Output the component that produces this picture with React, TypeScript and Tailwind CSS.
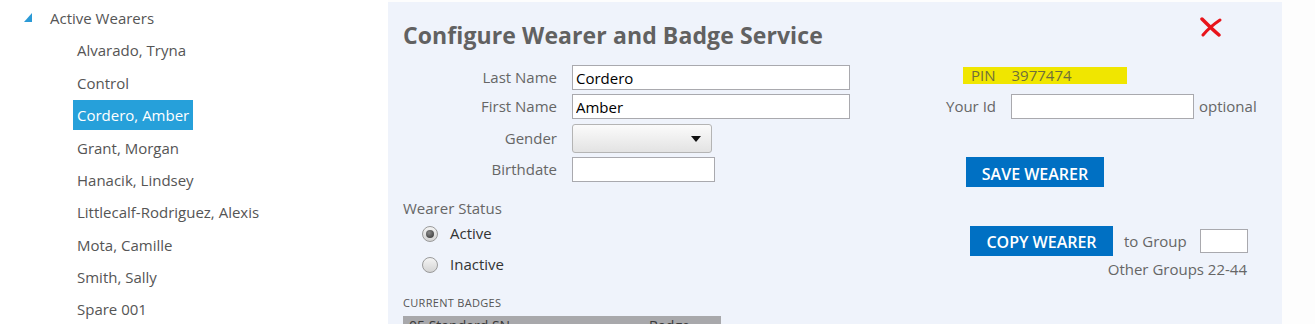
import React from "react";

const wearers = [
	"Alvarado, Tryna",
	"Control",
	"Cordero, Amber",
	"Grant, Morgan",
	"Hanacik, Lindsey",
	"Littlecalf-Rodriguez, Alexis",
	"Mota, Camille",
	"Smith, Sally",
	"Spare 001",
];

const font = { fontFamily: '"Open Sans", "Noto Sans", sans-serif' };

const Radio = ({ checked, label }: { checked?: boolean; label: string }) => (
	<label className="flex items-center gap-[12px] h-[31px]">
		<span className="w-[16px] h-[16px] rounded-full border border-[#9a9a9a] bg-gradient-to-b from-[#f4f4f4] to-[#d4d4d4] flex items-center justify-center">
			{checked && (
				<span className="w-[8px] h-[8px] rounded-full bg-[radial-gradient(circle_at_40%_35%,#8a8a8a,#2e2e2e)]" />
			)}
		</span>
		<span className="text-[15px] text-[#333]">{label}</span>
	</label>
);

const FieldRow = ({
	label,
	children,
	className,
}: {
	label: string;
	children: React.ReactNode;
	className?: string;
}) => (
	<div className={"flex items-center gap-[15px] " + (className || "")}>
		<span className="w-[154px] text-right text-[15px] text-[#666]">{label}</span>
		{children}
	</div>
);

const App: React.FC = () => {
	return (
		<div className="h-[324px] w-[1315px] overflow-hidden bg-[#fdfdfd] flex" style={font}>
			{/* tree */}
			<div className="w-[388px] shrink-0 bg-white pt-[2px]">
				<div className="h-[32.4px] flex items-center">
					<svg width="8" height="9" viewBox="0 0 8 9" className="ml-[24px] mt-[-2px]">
						<polygon points="8,0 8,9 0,9" fill="#2b9ad6" />
					</svg>
					<span className="ml-[18px] text-[15px] text-[#555]">Active Wearers</span>
				</div>
				{wearers.map((name) => (
					<div key={name} className="h-[32.4px] flex items-center pl-[73px]">
						<span
							className={
								"h-[30px] flex items-center px-[4px] text-[15px] " +
								(name === "Cordero, Amber" ? "bg-[#26a0da] text-white" : "text-[#555]")
							}>
							{name}
						</span>
					</div>
				))}
			</div>

			{/* configure panel */}
			<div className="w-[894px] shrink-0 mt-[2px] bg-[#eff3fb] pl-[15px]">
				<div className="flex justify-between pr-[59px] h-[61px]">
					<h1 className="mt-[18px] text-[23px] font-bold text-[#616161] leading-[30px] tracking-[0.1px]">
						Configure Wearer and Badge Service
					</h1>
					<svg width="24" height="20" viewBox="0 0 24 20" className="mt-[15px]">
						<path d="M3 2 C8 7 14 13 20 18" stroke="#e8141b" strokeWidth="3.5" strokeLinecap="round" fill="none" />
						<path d="M21 3 C15 7 9 12 4 18" stroke="#e8141b" strokeWidth="3" strokeLinecap="round" fill="none" />
					</svg>
				</div>

				<div className="flex">
					{/* left column */}
					<div className="w-[543px]">
						<div className="flex flex-col gap-[4px] mt-[2px]">
							<FieldRow label="Last Name">
								<input
									defaultValue="Cordero"
									className="w-[278px] h-[25px] border border-[#a9a9ae] bg-white px-[3px] text-[15px] text-black outline-none"
								/>
							</FieldRow>
							<FieldRow label="First Name">
								<input
									defaultValue="Amber"
									className="w-[278px] h-[25px] border border-[#a9a9ae] bg-white px-[3px] text-[15px] text-black outline-none"
								/>
							</FieldRow>
							<FieldRow label="Gender" className="mt-[1px]">
								<div className="w-[140px] h-[29px] rounded-[3px] border border-[#b4b4b4] bg-gradient-to-b from-[#fbfbfb] to-[#e3e3e3] flex items-center justify-end pr-[10px]">
									<svg width="10" height="6" viewBox="0 0 10 6">
										<polygon points="0,0 10,0 5,6" fill="#111" />
									</svg>
								</div>
							</FieldRow>
							<FieldRow label="Birthdate">
								<input className="w-[143px] h-[25px] border border-[#a9a9ae] bg-white outline-none" />
							</FieldRow>
						</div>

						<div className="mt-[16px] text-[15px] text-[#666] leading-[20px]">Wearer Status</div>
						<div className="ml-[19px] flex flex-col">
							<Radio checked label="Active" />
							<Radio label="Inactive" />
						</div>

						<div className="mt-[15px] text-[11px] tracking-[0.3px] text-[#555] uppercase">Current Badges</div>
						<div className="mt-[4px] w-[318px] h-[26px] bg-[#a8a8ab] flex items-start pt-[1px] px-[6px] text-[14px] leading-[18px] text-[#3a3a3a]">
							<span className="w-[240px]">05 Standard SN</span>
							<span>Badge</span>
						</div>
					</div>

					{/* right column */}
					<div className="flex flex-col">
						<div className="ml-[17px] mt-[4px] w-[164px] h-[17px] bg-[#f0e600] flex items-center text-[15px] text-[#6f6f3a]">
							<span className="ml-[8px]">PIN</span>
							<span className="ml-[16px]">3977474</span>
						</div>
						<div className="mt-[10px] flex items-center">
							<span className="text-[15px] text-[#666]">Your Id</span>
							<input className="ml-[15px] w-[183px] h-[25px] border border-[#a9a9ae] bg-white outline-none" />
							<span className="ml-[5px] text-[15px] text-[#666]">optional</span>
						</div>
						<button className="ml-[20px] mt-[38px] w-[138px] h-[30px] pt-[3px] bg-[#0070c3] text-white text-[16px] font-semibold self-start">
							SAVE WEARER
						</button>
						<div className="mt-[39px] ml-[24px] flex items-center">
							<button className="w-[143px] h-[30px] pt-[1px] bg-[#0070c3] text-white text-[16px] font-semibold">
								COPY WEARER
							</button>
							<span className="ml-[11px] text-[15px] text-[#666]">to Group</span>
							<input className="ml-[13px] w-[48px] h-[24px] border border-[#a9a9ae] bg-white outline-none" />
						</div>
						<div className="w-[301px] text-right text-[15px] text-[#666] leading-[20px] mt-[3px]">
							Other Groups 22-44
						</div>
					</div>
				</div>
			</div>
		</div>
	);
};

export default App;
